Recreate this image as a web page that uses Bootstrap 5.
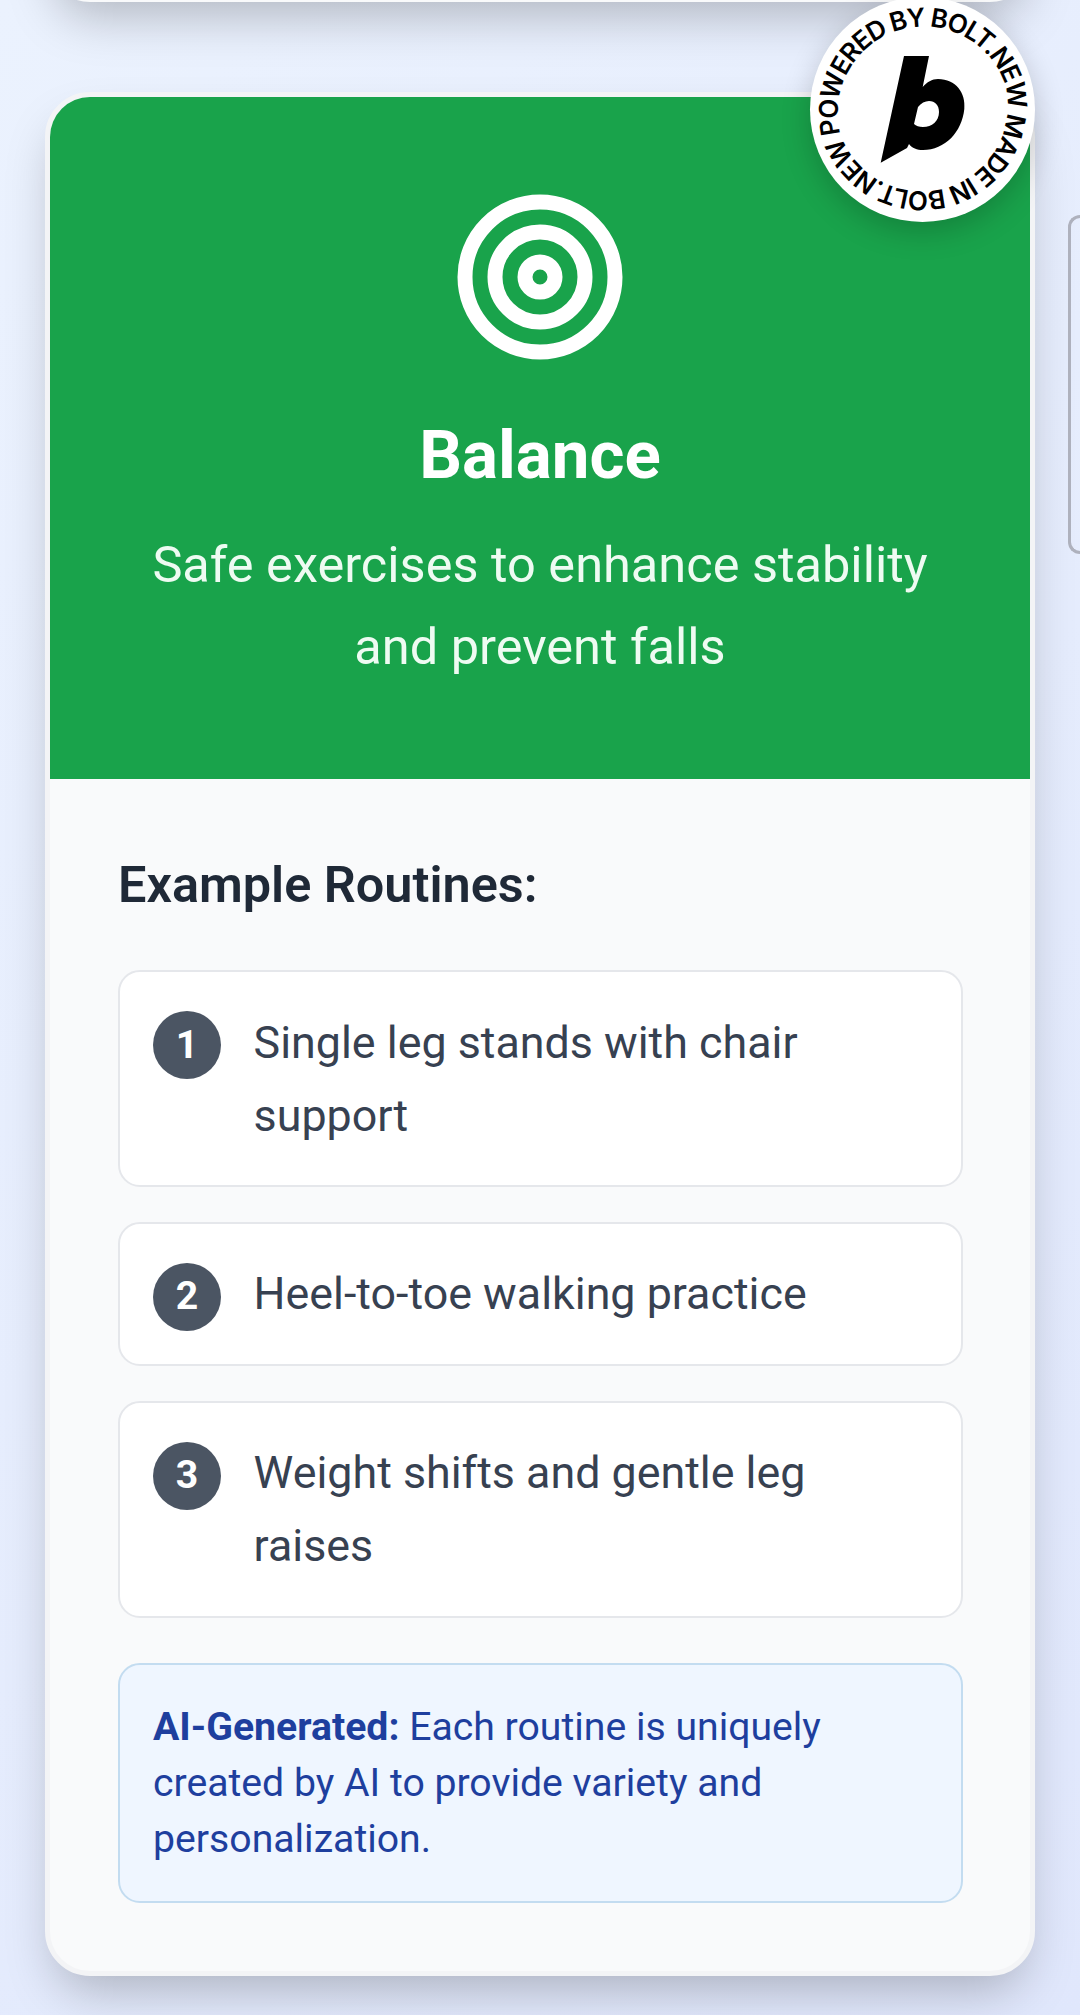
<!DOCTYPE html>
<html lang="en"><head><meta charset="utf-8">
<title>Balance</title>
<link href="https://cdn.jsdelivr.net/npm/bootstrap@5.3.0/dist/css/bootstrap.min.css" rel="stylesheet">
<style>
html,body{height:2015px;overflow:hidden}
body{font-family:Roboto,"Liberation Sans",sans-serif;background:linear-gradient(135deg,#ebf2fe 0%,#e0e7fc 100%);position:relative}
.prev-sheet{height:300px;margin:-298px 45px 0;background:#f9fafb;border-radius:45px;box-shadow:0 25px 50px -12px rgba(0,0,0,.25)}
.next-sheet{position:absolute;left:1068px;top:215px;width:12px;height:339px;border:3px solid #aeb1bd;border-right:0;border-radius:16px 0 0 16px}
.main-sheet{margin:90px 45px 0;height:1884px;background:#f9fafb;border:5px solid #f3f4f6;border-radius:45px;overflow:hidden;box-shadow:0 25px 50px -12px rgba(0,0,0,.25)}
.hero{background:#19a34b;color:#fff;height:682px;padding:90px 67px 0;text-align:center}
.hero svg{display:block;margin:0 auto}
.hero-title{font-size:67.2px;font-weight:700;line-height:80px;margin:48px 0 0}
.hero-sub{font-size:50.5px;line-height:82px;margin:28.5px 0 0;color:#eefbf2}
.body-pad{padding:67px 67px 0 68px}
.routine-title{font-size:50.4px;font-weight:600;line-height:78px;color:#1f2937;margin:0 0 46px}
.step{background:#fff;border:2px solid #e5e7eb;border-radius:22px;padding:33.5px 33px;gap:32.6px;margin-bottom:34.5px}
.step-num{width:68px;height:68px;flex:none;margin-top:5.5px;border-radius:50%;background:#4b5563;color:#fff;font-size:39.2px;font-weight:700}
.step-text{font-size:44.8px;line-height:73px;color:#374151}
.note{background:#eff6ff;border:2px solid #c3dcf0;border-radius:22px;padding:34px 33px;margin-top:45px;color:#1e3f9e;font-size:39.2px;line-height:56px}
.note strong{font-weight:700}
.bolt{position:absolute;left:810px;top:-3px;width:225px;height:225px;border-radius:50%;background:#fff;box-shadow:0 10px 30px rgba(0,0,0,.2)}
.bolt text{font-family:Inter,"Liberation Sans",sans-serif;font-size:26px;font-weight:600;fill:#000}
</style></head>
<body>
<div class="prev-sheet"></div>
<div class="next-sheet"></div>
<div class="main-sheet">
  <div class="hero">
    <svg width="180" height="180" viewBox="0 0 24 24" fill="none" stroke="#fff" stroke-width="2"><circle cx="12" cy="12" r="10"/><circle cx="12" cy="12" r="6"/><circle cx="12" cy="12" r="2"/></svg>
    <h1 class="hero-title">Balance</h1>
    <p class="hero-sub">Safe exercises to enhance stability and prevent falls</p>
  </div>
  <div class="body-pad">
    <h2 class="routine-title">Example Routines:</h2>
    <div class="step d-flex align-items-start"><span class="step-num d-flex align-items-center justify-content-center">1</span><span class="step-text">Single leg stands with chair support</span></div>
    <div class="step d-flex align-items-start"><span class="step-num d-flex align-items-center justify-content-center">2</span><span class="step-text">Heel-to-toe walking practice</span></div>
    <div class="step d-flex align-items-start"><span class="step-num d-flex align-items-center justify-content-center">3</span><span class="step-text">Weight shifts and gentle leg raises</span></div>
    <div class="note"><strong>AI-Generated:</strong> Each routine is uniquely created by AI to provide variety and personalization.</div>
  </div>
</div>
<div class="bolt">
  <svg width="225" height="225" viewBox="0 0 225 225">
    <defs><path id="ring" d="M30.5 137A86 86 0 0 1 194.9 87A86 86 0 0 1 30.5 137"/></defs>
    <text><textPath href="#ring" textLength="522" lengthAdjust="spacing">POWERED BY BOLT.NEW MADE IN BOLT.NEW</textPath></text>
    <path fill-rule="evenodd" fill="#000" d="M94 59H119L112.7 90C117 85 122 82 128 82C146 82 156 96 154.3 112C152 135 135 153 113 153C107 153 102 151 99 147L97 151L70.7 165.7ZM119 104C125 104 129 108 129 115C129 124 122 130 113 130C109 130 106 129 104 127L108 110C111 106 115 104 119 104Z"/>
  </svg>
</div>
</body></html>
